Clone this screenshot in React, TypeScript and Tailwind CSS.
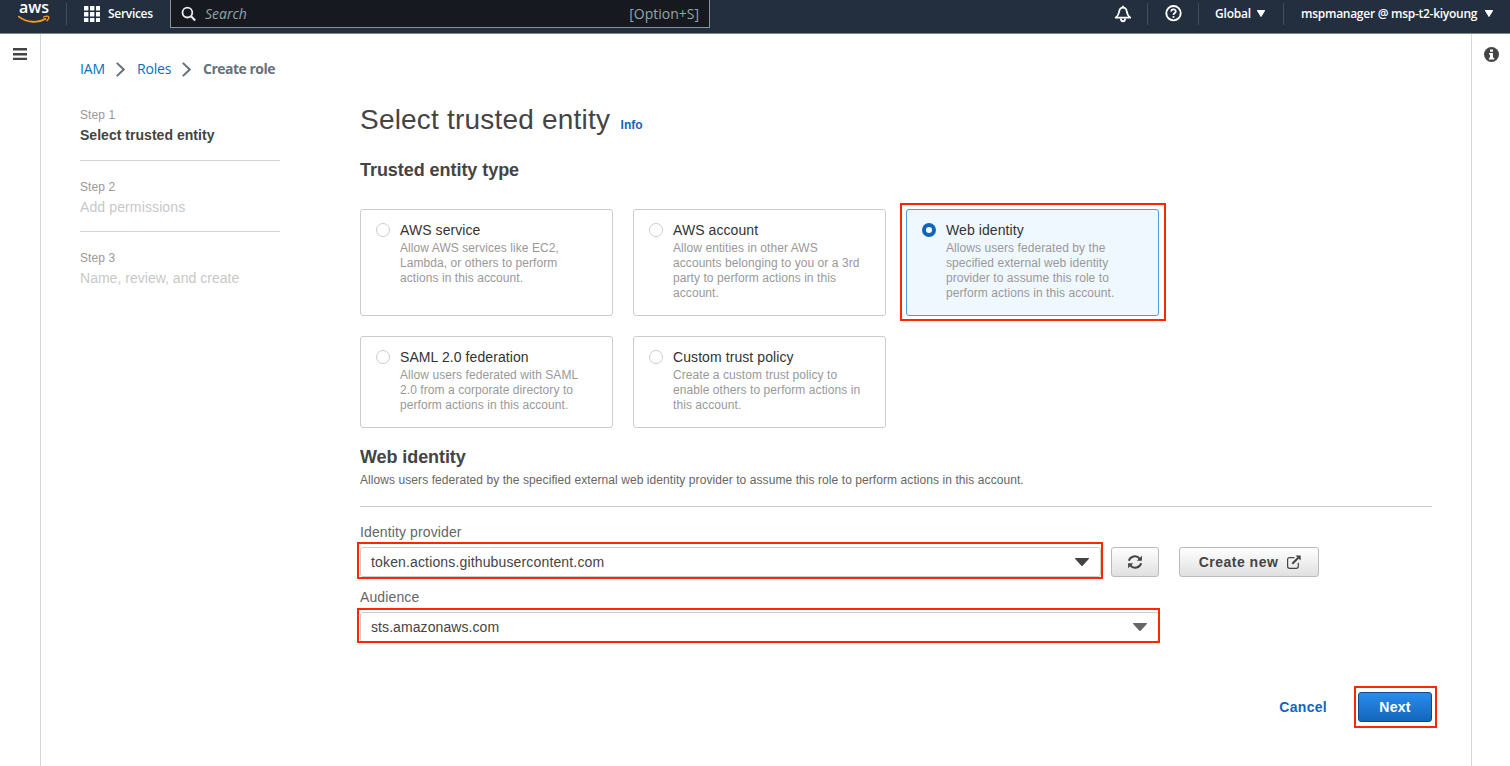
import React from "react";

const ember = "font-['Open_Sans',sans-serif]";

function Mark({ className }: { className: string }) {
  return <span className={`pointer-events-none absolute border-2 border-[#ff2600] ${className}`} />;
}

function Caret({ className }: { className: string }) {
  return (
    <svg className={className} viewBox="0 0 14 8" preserveAspectRatio="none" fill="currentColor">
      <path d="M0.6 0h12.8c.6 0 .8.6.4 1L7.6 7.7a.8.8 0 0 1-1.2 0L.2 1C-.2.6 0 0 .6 0z" />
    </svg>
  );
}

function Divider() {
  return <span className="h-[22px] w-px shrink-0 bg-[#414d5c]" />;
}

function Header() {
  return (
    <header className={`flex h-[34px] border-b border-[#7d858e] bg-[#232f3e] text-white ${ember}`}>
      <div className="flex h-[27px] w-[66px] flex-col pl-[18px]">
        <span className="h-[15px] w-8 pl-px text-[16px] leading-[14px] font-semibold">aws</span>
        <svg className="h-[8px] w-8" viewBox="0 0 32 8" fill="none">
          <path d="M.8 1.6C9 7.9 20 8.300 27.500 3.900" stroke="#f79a1c" strokeWidth="1.800" strokeLinecap="round" />
          <path d="M25.600 2c2-.9 4.500-.9 5-.4.5.700-.2 2.800-1.600 4.200" stroke="#f79a1c" strokeWidth="1.300" strokeLinecap="round" />
        </svg>
      </div>
      <div className="flex h-[27px] items-center">
        <Divider />
        <svg className="ml-[17px] h-4 w-4" viewBox="0 0 16 16" fill="currentColor">
          {[0, 6, 12].map((y) =>
            [0, 6, 12].map((x) => <rect key={`${x}-${y}`} x={x} y={y} width="4.400" height="4.400" rx=".5" />),
          )}
        </svg>
        <span className="ml-2 w-[62px] text-[12px] leading-4 font-semibold tracking-[-0.3px] whitespace-nowrap">Services</span>
      </div>
      <div className="flex h-[28px] w-[540px] items-center border border-t-0 border-[#879596] bg-[#16191f] pr-[10px] pl-[10px]">
        <svg className="h-4 w-4" viewBox="0 0 16 16" fill="none" stroke="#eaeded" strokeWidth="1.800">
          <circle cx="6.400" cy="6.600" r="4.900" />
          <path d="M9.800 10l4.400 4.600" strokeWidth="2.100" />
        </svg>
        <span className="ml-[8px] text-[14px] leading-5 text-[#95a5a6] italic">Search</span>
        <span className="ml-auto text-[14px] leading-5 text-[#95a5a6]">[Option+S]</span>
      </div>
      <div className="ml-auto flex h-[27px] items-center text-[12px] font-semibold">
        <svg className="mr-[15px] h-[18px] w-[18px]" viewBox="0 0 18 18" fill="none" stroke="white" strokeWidth="1.800" strokeLinejoin="round">
          <path d="M1.700 12.600h14.600c-2.400-1.800-3.200-3.400-3.500-6.100C12.500 3.900 11 2.600 9 2.600S5.500 3.900 5.200 6.500C4.900 9.200 4.100 10.800 1.700 12.600z" />
          <path d="M9 .7v1.900" />
          <path d="M6.900 13.400c0 3.800 4.200 3.800 4.200 0" />
        </svg>
        <Divider />
        <svg className="mr-[16px] ml-[17px] h-[17px] w-[17px]" viewBox="0 0 17 17" fill="none" stroke="white" strokeWidth="1.900">
          <circle cx="8.500" cy="8.200" r="7.200" />
          <path d="M6.200 6.600c0-3.100 4.600-3 4.600-.2 0 1.700-2.300 1.600-2.300 3.500" strokeWidth="1.700" />
          <path d="M8.500 11.100v1.700" strokeWidth="1.800" />
        </svg>
        <Divider />
        <span className="ml-[16px] w-[42px] tracking-[-0.2px] whitespace-nowrap">Global</span>
        <Caret className="h-[7px] w-2" />
        <span className="w-[18px]" />
        <Divider />
        <span className="ml-[17px] w-[184px] tracking-[-0.27px] whitespace-nowrap">mspmanager @ msp-t2-kiyoung</span>
        <Caret className="mr-[17px] h-[7px] w-2" />
      </div>
    </header>
  );
}

function Chevron() {
  return (
    <svg className="h-[15px] w-[9px]" viewBox="0 0 9 15" fill="none" stroke="#687078" strokeWidth="2">
      <path d="M.8.900l6.900 6.600L.8 14.100" />
    </svg>
  );
}

const steps = [
  { n: "Step 1", t: "Select trusted entity", c: "font-bold text-[#444] text-[14px] tracking-[0.03px]" },
  { n: "Step 2", t: "Add permissions", c: "text-[#c8c8c8] text-[14px] tracking-[0.12px]" },
  { n: "Step 3", t: "Name, review, and create", c: "text-[#c8c8c8] text-[14px] tracking-[0.02px]" },
];

function Steps() {
  return (
    <ol className="w-[200px]">
      {steps.map((s, i) => (
        <li
          key={s.n}
          className={`whitespace-nowrap ${i < 2 ? "mb-[17px] h-[54.500px] border-b border-[#d5d5d5]" : ""}`}
        >
          <div className="text-[12px] leading-[18px] tracking-[0.1px] text-[#999]">{s.n}</div>
          <div className={`leading-[22px] ${s.c}`}>{s.t}</div>
        </li>
      ))}
    </ol>
  );
}

type Entity = { title: string; lines: string[]; selected?: boolean };

const entities: Entity[] = [
  {
    title: "AWS service",
    lines: ["Allow AWS services like EC2,", "Lambda, or others to perform", "actions in this account."],
  },
  {
    title: "AWS account",
    lines: ["Allow entities in other AWS", "accounts belonging to you or a 3rd", "party to perform actions in this", "account."],
  },
  {
    title: "Web identity",
    selected: true,
    lines: [
      "Allows users federated by the",
      "specified external web identity",
      "provider to assume this role to",
      "perform actions in this account.",
    ],
  },
  {
    title: "SAML 2.0 federation",
    lines: ["Allow users federated with SAML", "2.0 from a corporate directory to", "perform actions in this account."],
  },
  {
    title: "Custom trust policy",
    lines: ["Create a custom trust policy to", "enable others to perform actions in", "this account."],
  },
];

function Card({ title, lines, selected }: Entity) {
  return (
    <div
      className={`relative flex rounded-[3px] border pt-[11px] pl-[15px] ${
        selected ? "border-[#4f9de6] bg-[#f0f8ff]" : "border-[#ccc] bg-white"
      }`}
    >
      <span
        className={`mt-[2px] h-[14px] w-[14px] shrink-0 rounded-full bg-white ${
          selected ? "border-4 border-[#1166bb]" : "border border-[#ccc]"
        }`}
      />
      <div className="ml-[10px] whitespace-nowrap">
        <div className="h-5 text-[14px] leading-[19px] tracking-[0.08px] text-[#333]">{title}</div>
        {lines.map((l) => (
          <div key={l} className="text-[12px] leading-[15px] tracking-[0.07px] text-[#999]">
            {l}
          </div>
        ))}
      </div>
      {selected && <Mark className="-top-[7px] -left-[7px] h-[118px] w-[266px]" />}
    </div>
  );
}

function Select({ value, className, caret, mark }: { value: string; className: string; caret: string; mark: string }) {
  return (
    <div className={`relative flex items-center rounded-[3px] border border-[#ccc] bg-white pr-[11px] pl-[10px] ${className}`}>
      <span className="text-[14px] leading-5 text-[#444]">{value}</span>
      <Caret className={`ml-auto h-2 w-[14px] ${caret}`} />
      <Mark className={mark} />
    </div>
  );
}

const grayButton =
  "flex h-[30px] items-center justify-center rounded-[3px] border border-[#bbb] bg-linear-to-b from-white to-[#e0e0e0] text-[#444]";

export default function App() {
  return (
    <div className="flex h-[766px] w-[1510px] flex-col overflow-hidden bg-white font-['Liberation_Sans',Arial,sans-serif] text-[#444]">
      <Header />
      <div className="flex flex-1">
        <aside className="w-[41px] border-r border-[#d5dbdb] pt-[14px] pl-[13px]">
          <svg className="h-3 w-[14px]" viewBox="0 0 14 12" fill="#444">
            <path d="M0 0h14v2.500H0zM0 4.900h14v2.500H0zM0 9.700h14v2.300H0z" />
          </svg>
        </aside>
        <div className="flex-1 pl-[39px]">
          <nav className={`mt-[25px] flex h-5 items-center text-[14px] leading-5 whitespace-nowrap text-[#0073bb] ${ember}`}>
            <span className="w-[36px] tracking-[-0.1px]">IAM</span>
            <Chevron />
            <span className="ml-3 w-[45px] tracking-[-0.2px]">Roles</span>
            <Chevron />
            <span className="ml-3 font-bold tracking-[-0.5px] text-[#687078]">Create role</span>
          </nav>
          <div className="mt-[27px] flex">
            <Steps />
            <main className="ml-20 w-[1072px]">
              <h1 className="-mt-[4px] flex h-[36px] items-baseline whitespace-nowrap">
                <span className="text-[28px] leading-[36px] tracking-[0.2px]">Select trusted entity</span>
                <a className="ml-[10.500px] text-[12px] font-bold text-[#1166bb]">Info</a>
              </h1>
              <h2 className="mt-[20px] text-[18px] leading-6 font-bold tracking-[-0.05px] whitespace-nowrap">Trusted entity type</h2>
              <div className="mt-[27px] grid w-[799px] grid-cols-[253px_253px_253px] grid-rows-[107px_92px] gap-5">
                {entities.map((e) => (
                  <Card key={e.title} {...e} />
                ))}
              </div>
              <h2 className="mt-[17px] text-[18px] leading-6 font-bold tracking-[-0.08px] whitespace-nowrap">Web identity</h2>
              <p className="mt-[3px] text-[12px] leading-4 tracking-[0.075px] whitespace-nowrap text-[#666]">
                Allows users federated by the specified external web identity provider to assume this role to perform actions in this account.
              </p>
              <div className="mt-[18px] h-px bg-[#ccc]" />
              <div className="mt-[15px] text-[14px] leading-5 tracking-[0.12px] text-[#666]">Identity provider</div>
              <div className="mt-[5px] flex">
                <Select
                  value="token.actions.githubusercontent.com"
                  className="h-[30px] w-[741px] tracking-[0.15px]"
                  caret="text-[#444]"
                  mark="-top-[6px] -left-[4px] h-[37px] w-[746px]"
                />
                <button className={`ml-[10px] w-[48px] ${grayButton}`}>
                  <svg className="h-[14px] w-[16px]" viewBox="0 0 16 14" fill="none" stroke="#444" strokeWidth="2">
                    <path d="M1.900 5.800C3 1.200 9.500-.4 12.700 3.600M14.100 8.200C13 12.800 6.500 14.400 3.300 10.400" />
                    <path d="M14.900.7v5.100H9.800zM1.100 13.300V8.200h5.100z" fill="#444" stroke="none" />
                  </svg>
                </button>
                <button className={`ml-[20px] w-[140px] gap-[9px] pl-[2px] text-[14px] font-bold whitespace-nowrap ${grayButton}`}>
                  <span className="tracking-[0.5px]">Create new</span>
                  <svg className="h-[14px] w-[14px]" viewBox="0 0 14 14" fill="none" stroke="#444" strokeWidth="1.200">
                    <path d="M7.500 2.600H2.600a2 2 0 0 0-2 2v6.700a2 2 0 0 0 2 2h6.700a2 2 0 0 0 2-2V7.800" />
                    <path d="M5.300 8.700l6-6" strokeWidth="2" />
                    <path d="M8.500.4h5.200v5.200z" fill="#444" stroke="none" />
                  </svg>
                </button>
              </div>
              <div className="mt-[10px] text-[14px] leading-5 tracking-[0.12px] text-[#666]">Audience</div>
              <Select
                value="sts.amazonaws.com"
                className="mt-[5px] h-[30px] w-[799px] tracking-[0.08px]"
                caret="text-[#666]"
                mark="-top-[5px] -left-[4px] h-[35px] w-[803px]"
              />
              <div className="mt-[50px] flex items-center justify-end">
                <a className="mr-[31px] text-[14px] leading-5 font-bold tracking-[0.3px] text-[#1166bb]">Cancel</a>
                <button className="relative h-[30px] w-[74px] rounded-[3px] border border-[#0f4a8a] bg-linear-to-b from-[#2b8cee] to-[#1166bb] text-[14px] font-bold tracking-[0.3px] text-white">
                  Next
                  <Mark className="-top-[7px] -left-[5px] h-[42px] w-[83px]" />
                </button>
              </div>
            </main>
          </div>
        </div>
        <aside className="w-[39px] border-l border-[#d5dbdb] pt-[13px] pl-[12px]">
          <svg className="h-[15px] w-[15px]" viewBox="0 0 15 15">
            <circle cx="7.500" cy="7.500" r="7.500" fill="#444" />
            <path d="M6 2.500h3v2.200H6zM5 6h4v4.800h1.200v1.700H4.900v-1.700H6V7.600H5z" fill="white" />
          </svg>
        </aside>
      </div>
    </div>
  );
}
